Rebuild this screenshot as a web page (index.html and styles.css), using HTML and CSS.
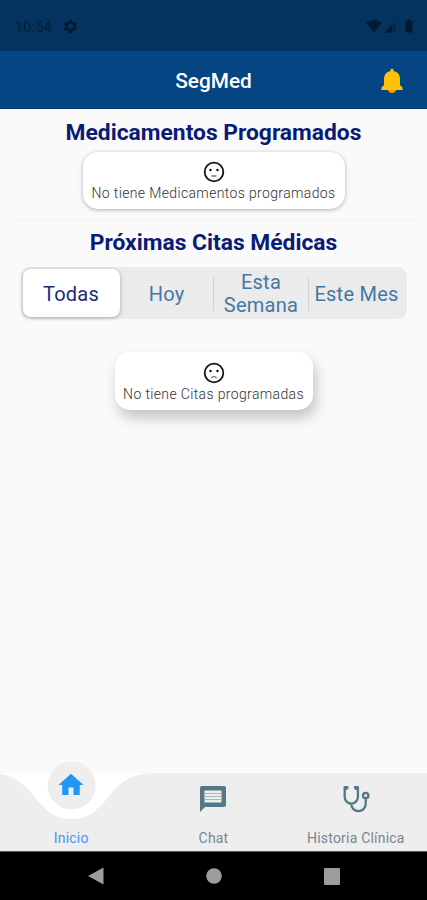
FILE: index.html
```html
<!DOCTYPE html>
<html lang="es">
<head>
<meta charset="utf-8">
<title>SegMed</title>
<link rel="stylesheet" href="styles.css">
</head>
<body>
<div class="phone">
  <div class="status">
    <span class="clock">10:54</span>
    <svg class="gear" width="13" height="13" viewBox="2 2 20 20"><path d="M19.4 13a7.500 7.500 0 0 0 0-2l2.100-1.600a.5.5 0 0 0 .1-.6l-2-3.500a.5.5 0 0 0-.6-.2l-2.500 1a7 7 0 0 0-1.700-1l-.4-2.600a.5.5 0 0 0-.5-.4h-4a.5.5 0 0 0-.5.400L9 5.100a7 7 0 0 0-1.700 1l-2.500-1a.5.5 0 0 0-.6.2l-2 3.500a.5.5 0 0 0 .1.600L4.500 11a7.500 7.500 0 0 0 0 2l-2.200 1.600a.5.5 0 0 0-.1.600l2 3.500c.1.200.4.300.6.200l2.500-1a7 7 0 0 0 1.700 1l.4 2.600c0 .3.200.5.500.5h4c.3 0 .5-.2.500-.5l.4-2.600a7 7 0 0 0 1.700-1l2.500 1c.2.100.5 0 .6-.2l2-3.500a.5.5 0 0 0-.1-.6zM12 16.200a4.200 4.200 0 1 1 0-8.400 4.200 4.200 0 0 1 0 8.400z" fill-rule="evenodd"/></svg>
    <svg class="signals" width="50" height="16" viewBox="0 0 50 16"><path d="M1 3.500Q9-1.500 17 3.500L9 13.500z"/><path d="M31 2v11.500H19.500z" opacity=".35"/><path d="M27 6v7.500h-7.500z"/><path d="M40.500 2h2V.5h3V2h2v11.500h-7z"/></svg>
  </div>
  <header class="appbar">
    <h1 class="brand">SegMed</h1>
    <svg class="bell" width="24" height="28" viewBox="0 0 24 28"><path d="M8 21h8a4 4 0 0 1-8 0z" fill="#ff9800"/><path d="M10.500 3V2a1.500 1.500 0 0 1 3 0v1q6.500 1.500 6.500 8v6l2.500 2.500V22H1.500v-2.500L4 17v-6q0-6.500 6.500-8z" fill="#ffc107"/></svg>
  </header>
  <main class="content">
    <h2 class="heading heading-meds">Medicamentos Programados</h2>
    <section class="card card-meds">
      <svg width="22" height="22" viewBox="0 0 22 22"><circle class="face" cx="11" cy="11" r="9.300"/><circle cx="7.500" cy="9" r="1.200"/><circle cx="14.500" cy="9" r="1.200"/><path class="mouth" d="M8.500 15h5"/></svg>
      <p class="note note-meds">No tiene Medicamentos programados</p>
    </section>
    <hr class="rule">
    <h2 class="heading heading-dates">Próximas Citas Médicas</h2>
    <div class="tabs">
      <div class="tab active"><span>Todas</span></div>
      <div class="tab"><span>Hoy</span></div>
      <div class="tab divided"><span>Esta<br>Semana</span></div>
      <div class="tab divided"><span class="month">Este Mes</span></div>
    </div>
    <section class="card card-dates">
      <svg width="22" height="22" viewBox="0 0 22 22"><circle class="face" cx="11" cy="11" r="9.300"/><circle cx="7.500" cy="9" r="1.200"/><circle cx="14.500" cy="9" r="1.200"/><path class="mouth" d="M8.500 16q2.500-3 5 0"/></svg>
      <p class="note note-dates">No tiene Citas programadas</p>
    </section>
  </main>
  <nav class="nav">
    <svg class="nav-shape" width="427" height="89" viewBox="0 0 427 89"><path d="M0 11h427v78H0z" fill="#fff"/><path d="M0 12C16 14 27 24 37 38C48 51 56 57 71.500 57S94 51 106 38C118 22 130 11 155 11H427V89H0z" fill="#eee"/><circle cx="71.700" cy="23.500" r="24" fill="#eee"/></svg>
    <div class="nav-item selected">
      <svg class="nav-icon home" width="30" height="30" viewBox="0 0 24 24"><path d="M10 20v-6h4v6h5v-8h3L12 3 2 12h3v8z"/></svg>
      <span>Inicio</span>
    </div>
    <div class="nav-item">
      <svg class="nav-icon" width="32" height="32" viewBox="0 0 32 32"><path fill-rule="evenodd" d="M5 3h22a2 2 0 0 1 2 2v17a2 2 0 0 1-2 2H8l-5 5V5a2 2 0 0 1 2-2zM7.500 7.500v12h17v-12z"/><path class="chat-lines" d="M8 10.500h16M8 13.500h16M8 16.500h16"/></svg>
      <span>Chat</span>
    </div>
    <div class="nav-item">
      <svg class="nav-icon scope" width="32" height="32" viewBox="0 0 32 32"><path d="M8.500 4.500H4.700V14a6.600 6.600 0 0 0 13.200 0V4.500H14M11.300 20.500v.5a7.200 7.200 0 0 0 14.400 0v-5.500"/><path class="scope-tips" d="M6 3v4M16.500 3v4"/><circle cx="25.700" cy="12.500" r="2.700"/></svg>
      <span class="history">Historia Clínica</span>
    </div>
  </nav>
  <div class="system">
    <svg width="16" height="18" viewBox="0 0 16 18"><path d="M15.500 .5v17L0 9z"/></svg>
    <svg width="16" height="16" viewBox="0 0 16 16"><circle cx="8" cy="8" r="7.800"/></svg>
    <svg width="16" height="17" viewBox="0 0 16 17"><rect width="16" height="17" rx="1"/></svg>
  </div>
</div>
</body>
</html>
```
FILE: styles.css
```css
* { box-sizing: border-box; }
body { margin: 0; font-family: Roboto, "Liberation Sans", sans-serif; }
h1, h2, p { margin: 0; white-space: nowrap; }
svg { display: block; flex: none; }
.phone { width: 427px; height: 900px; display: flex; flex-direction: column; background: #fafafa; overflow: hidden; }
.status { height: 51px; padding: 2px 12px 0 15px; display: flex; align-items: center; background: #04335f; color: #031d37; fill: #021a31; }
.clock { font-size: 14.500px; letter-spacing: .2px; padding-top: 1px; }
.gear { margin-left: 12px; }
.signals { margin-left: auto; }
.appbar { height: 58px; padding-top: 2px; display: grid; grid-template-columns: 1fr auto 1fr; align-items: center; background: #064583; border-bottom: 1px solid #053a70; }
.brand { grid-column: 2; color: #fff; font-size: 20.800px; font-weight: 500; line-height: 24px; }
.bell { justify-self: end; margin: 2px 23px 0 0; }
.content { flex: 1; display: flex; flex-direction: column; align-items: center; }
.heading { color: #0a1b75; font-size: 22.800px; font-weight: 700; line-height: 28px; }
.heading-meds { margin-top: 10px; }
.card { display: flex; flex-direction: column; align-items: center; background: #fff; border-radius: 15px; }
.card-meds { width: 262px; height: 57px; margin-top: 5px; padding-top: 9px; box-shadow: 0 1px 4px rgba(0,0,0,.3); }
.card-dates { width: 198px; height: 58px; margin-top: 33px; padding-top: 10px; box-shadow: 3px 8px 14px rgba(0,0,0,.22); }
.face, .mouth { fill: none; stroke: #151515; stroke-width: 1.800; }
.mouth { stroke-width: 1.200; stroke: #555; }
.note { color: #333; font-size: 14px; font-weight: 300; line-height: 20px; letter-spacing: .36px; }
.rule { width: 403px; height: 1px; margin: 11px 0 0; border: 0; background: #f0f0f0; }
.heading-dates { margin-top: 8px; }
.tabs { width: 386px; height: 52px; margin-top: 10px; padding: 2px; display: grid; grid-template-columns: 97px 94px 95px 96px; background: #ebebeb; border-radius: 9px; }
.tab { position: relative; padding-top: 2px; display: flex; align-items: center; justify-content: center; color: #4378a5; font-size: 20px; line-height: 23px; letter-spacing: .25px; text-align: center; white-space: nowrap; }
.active { color: #1b2977; background: #fff; border-radius: 8px; box-shadow: 0 1px 4px rgba(0,0,0,.3); }
.divided::before { content: ""; position: absolute; left: -1px; top: 8px; height: 34px; width: 1px; background: #d2d2d2; }
.nav { position: relative; height: 89px; display: grid; grid-template-columns: repeat(3, 1fr); }
.nav-shape { position: absolute; left: 0; top: 0; }
.nav-item { position: relative; display: flex; flex-direction: column; align-items: center; justify-content: space-between; padding: 21px 0 4px; color: #78878e; fill: #547887; font-size: 14px; line-height: 18px; letter-spacing: .2px; }
.selected { padding-top: 8px; color: #4796ee; fill: #2196f3; }
.chat-lines { stroke: #a5b7bf; stroke-width: 1.200; }
.scope { fill: none; stroke: #547887; stroke-width: 2.300; }
.scope-tips { stroke-width: 3; }
.history { white-space: nowrap; }
.system { height: 49px; display: flex; align-items: center; justify-content: center; gap: 102px; background: #000; fill: #9d9d9d; border-top: 1px solid #555; }
```
